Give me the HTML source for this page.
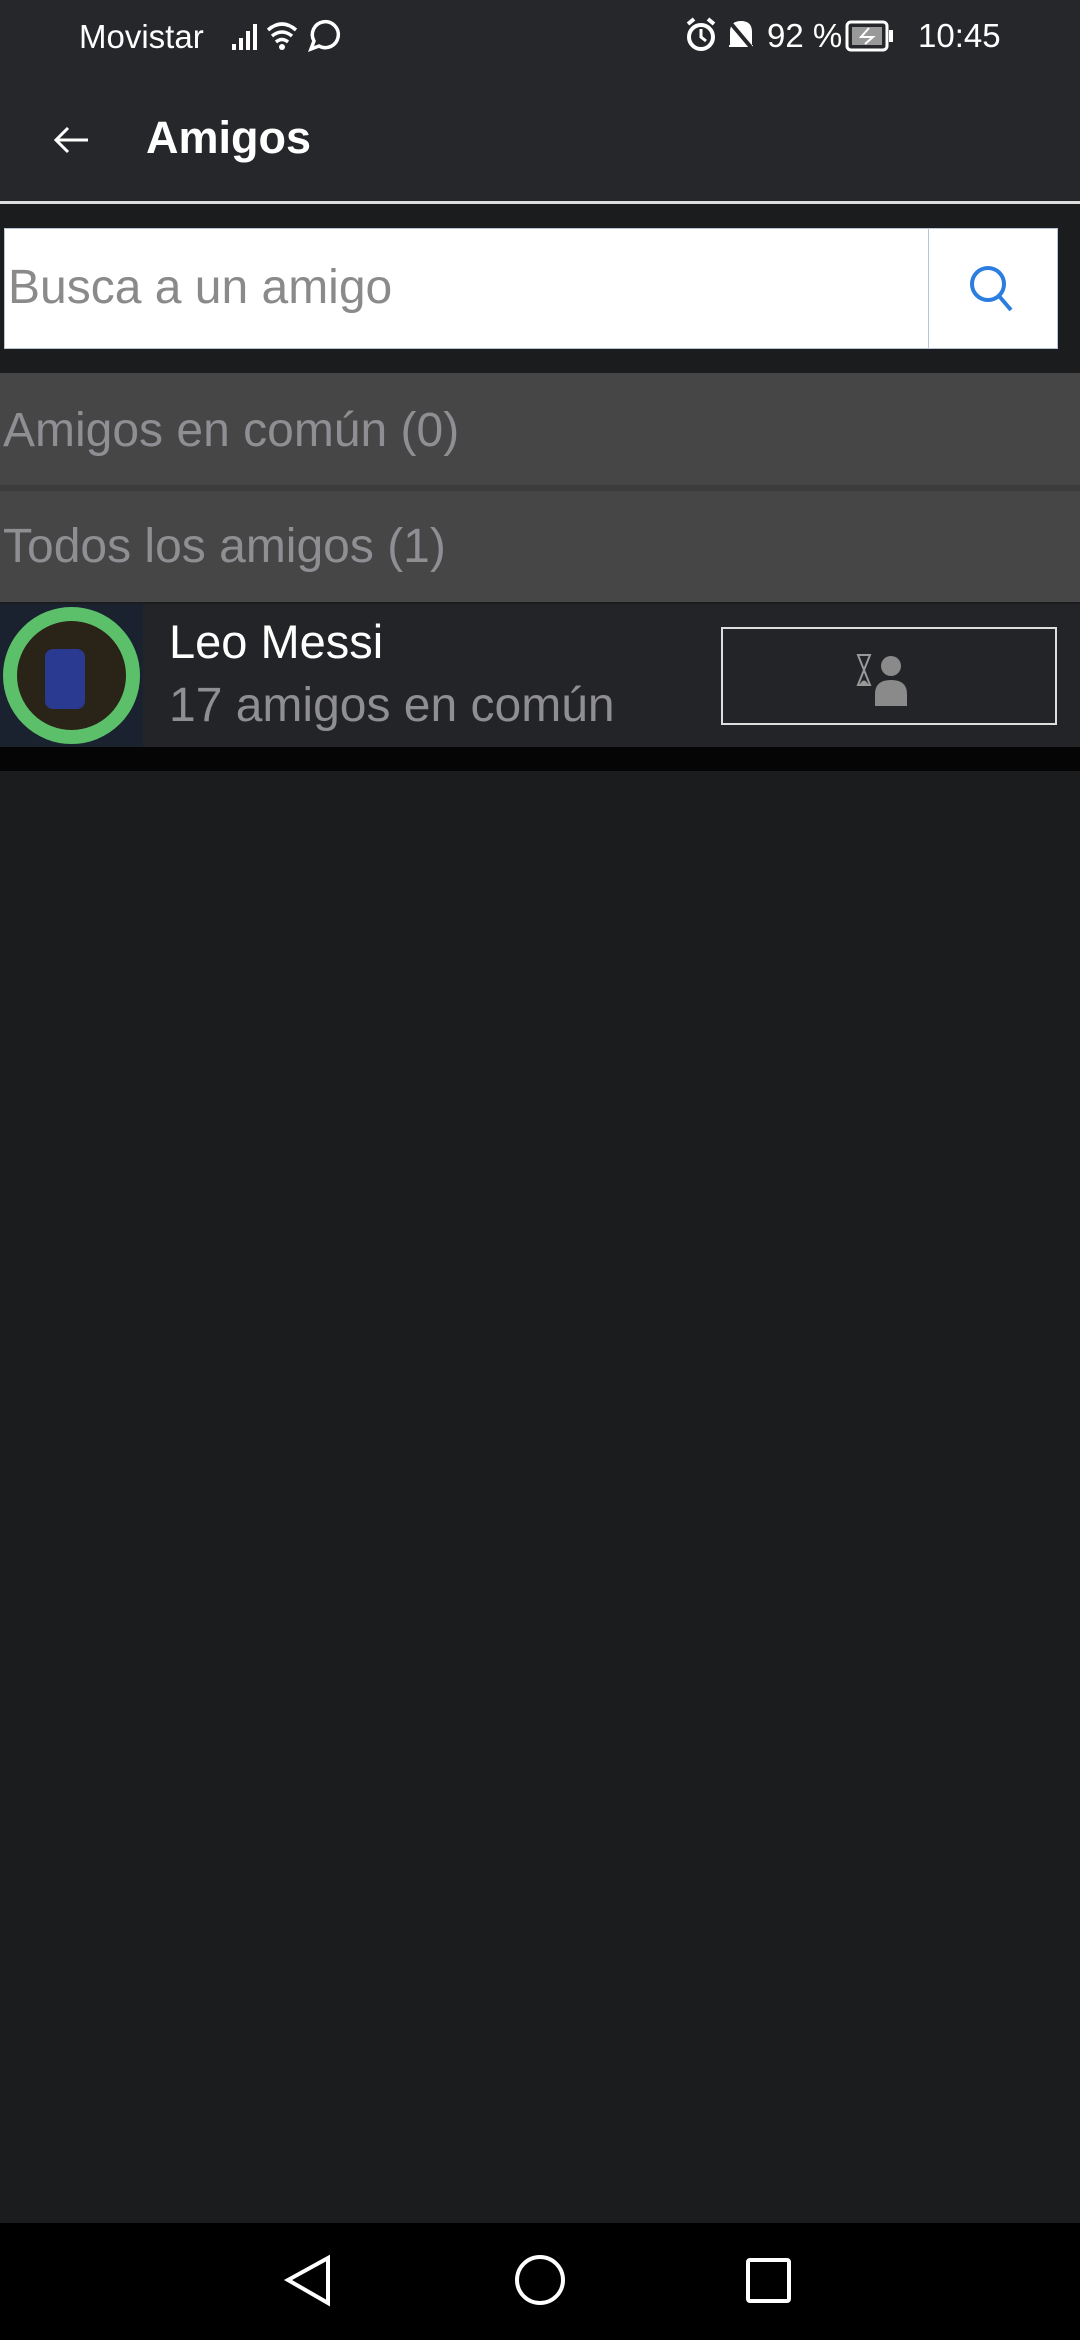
<!DOCTYPE html>
<html><head><meta charset="utf-8"><style>
*{margin:0;padding:0;box-sizing:border-box}
body{width:1080px;height:2340px;background:#1b1c1e;font-family:"Liberation Sans",sans-serif;position:relative;overflow:hidden}
.a{position:absolute}
</style></head><body>
<div class="a" style="left:0;top:0;width:1080px;height:201px;background:#26272a"></div>
<div class="a" style="left:79px;top:18px;color:#fff;font-size:33px">Movistar</div>
<svg class="a" style="left:230px;top:16px" width="130" height="40" viewBox="0 0 130 40">
<g fill="#fff"><rect x="2" y="28" width="4" height="6"/><rect x="9" y="22" width="4" height="12"/><rect x="16" y="15" width="4" height="19"/><rect x="23" y="8" width="4" height="26"/></g>
<g fill="none" stroke="#fff" stroke-width="3.5"><path d="M38 14 Q52 2 66 14"/><path d="M42 20 Q52 12 62 20"/><path d="M46 26 Q52 21 58 26"/><path d="M81 33 L84 25 A13 13 0 1 1 89 30 Z"/></g>
<circle cx="52" cy="31" r="3" fill="#fff"/></svg>
<svg class="a" style="left:683px;top:16px" width="230" height="40" viewBox="0 0 230 40">
<circle cx="18" cy="21" r="12" fill="none" stroke="#fff" stroke-width="4"/><path d="M18 13 V21 L23 25" stroke="#fff" stroke-width="3" fill="none"/><path d="M5 8 L11 3 M31 8 L25 3" stroke="#fff" stroke-width="4"/>
<path d="M48 30 L48 16 Q48 6 58 6 Q68 6 68 16 L68 30 Z M46 30 H70" fill="#fff" stroke="#fff" stroke-width="2"/>
<line x1="45" y1="4" x2="72" y2="36" stroke="#26272a" stroke-width="4"/>
<rect x="164" y="6" width="40" height="28" rx="4" fill="none" stroke="#fff" stroke-width="3"/><rect x="169" y="11" width="30" height="18" fill="#999"/><path d="M186 12 L178 21 H190 L182 28" stroke="#fff" stroke-width="2" fill="none"/><rect x="206" y="14" width="4" height="12" fill="#fff"/>
</svg>
<div class="a" style="left:767px;top:17px;color:#fff;font-size:33px">92 %</div>
<div class="a" style="left:918px;top:17px;color:#fff;font-size:33px">10:45</div>
<svg class="a" style="left:52px;top:124px" width="40" height="32" viewBox="0 0 40 32"><path d="M36 16 H4 M16 4 L4 16 L16 28" fill="none" stroke="#fff" stroke-width="3"/></svg>
<div class="a" style="left:146px;top:112px;color:#fff;font-size:45px;font-weight:bold">Amigos</div>
<div class="a" style="left:0;top:201px;width:1080px;height:3px;background:#ddd"></div>
<div class="a" style="left:4px;top:228px;width:1054px;height:121px;background:#fff;border:1px solid #b8c4d8"></div>
<div class="a" style="left:928px;top:229px;width:1px;height:119px;background:#b8c4d8"></div>
<div class="a" style="left:8px;top:260px;color:#8a8a8a;font-size:48px">Busca a un amigo</div>
<svg class="a" style="left:966px;top:262px" width="52" height="52" viewBox="0 0 52 52"><circle cx="22" cy="22" r="16" fill="none" stroke="#2b7de0" stroke-width="4"/><path d="M33 34 L45 48" stroke="#2b7de0" stroke-width="4"/></svg>
<div class="a" style="left:0;top:373px;width:1080px;height:112px;background:#464646"></div>
<div class="a" style="left:0;top:485px;width:1080px;height:6px;background:#3a3b3d"></div>
<div class="a" style="left:0;top:491px;width:1080px;height:111px;background:#464646"></div>
<div class="a" style="left:3px;top:403px;color:#8e8e93;font-size:48px">Amigos en común (0)</div>
<div class="a" style="left:3px;top:519px;color:#8e8e93;font-size:48px">Todos los amigos (1)</div>
<div class="a" style="left:0;top:604px;width:1080px;height:143px;background:#232427"></div>
<div class="a" style="left:0;top:604px;width:143px;height:143px;background:#1a2230;overflow:hidden"><div class="a" style="left:3px;top:3px;width:137px;height:137px;border-radius:50%;border:14px solid #5cc06a;background:#2a2418"></div><div class="a" style="left:45px;top:45px;width:40px;height:60px;background:#2a3a90;border-radius:8px"></div></div>
<div class="a" style="left:169px;top:614px;color:#fff;font-size:47px">Leo Messi</div>
<div class="a" style="left:169px;top:678px;color:#8e8e93;font-size:48px">17 amigos en común</div>
<div class="a" style="left:721px;top:627px;width:336px;height:98px;border:2px solid #ddd"></div>
<svg class="a" style="left:855px;top:650px" width="70" height="60" viewBox="0 0 70 60"><path d="M3 5 H15 L9 20 L15 35 H3 L9 20 Z" fill="none" stroke="#999" stroke-width="2"/><path d="M5 34 Q9 27 13 34 Z" fill="#999"/><circle cx="36" cy="16" r="10" fill="#8a8a8a"/><path d="M20 56 V44 Q20 30 36 30 Q52 30 52 44 V56 Z" fill="#8a8a8a"/></svg>
<div class="a" style="left:0;top:747px;width:1080px;height:24px;background:#050505"></div>
<div class="a" style="left:0;top:2223px;width:1080px;height:117px;background:#000"></div>
<svg class="a" style="left:0;top:2223px" width="1080" height="117" viewBox="0 0 1080 117"><g fill="none" stroke="#fff" stroke-width="4"><path d="M328 35 L288 57 L328 80 Z"/><circle cx="540" cy="57" r="23"/><rect x="748" y="37" width="41" height="41" rx="2"/></g></svg>
</body></html>
